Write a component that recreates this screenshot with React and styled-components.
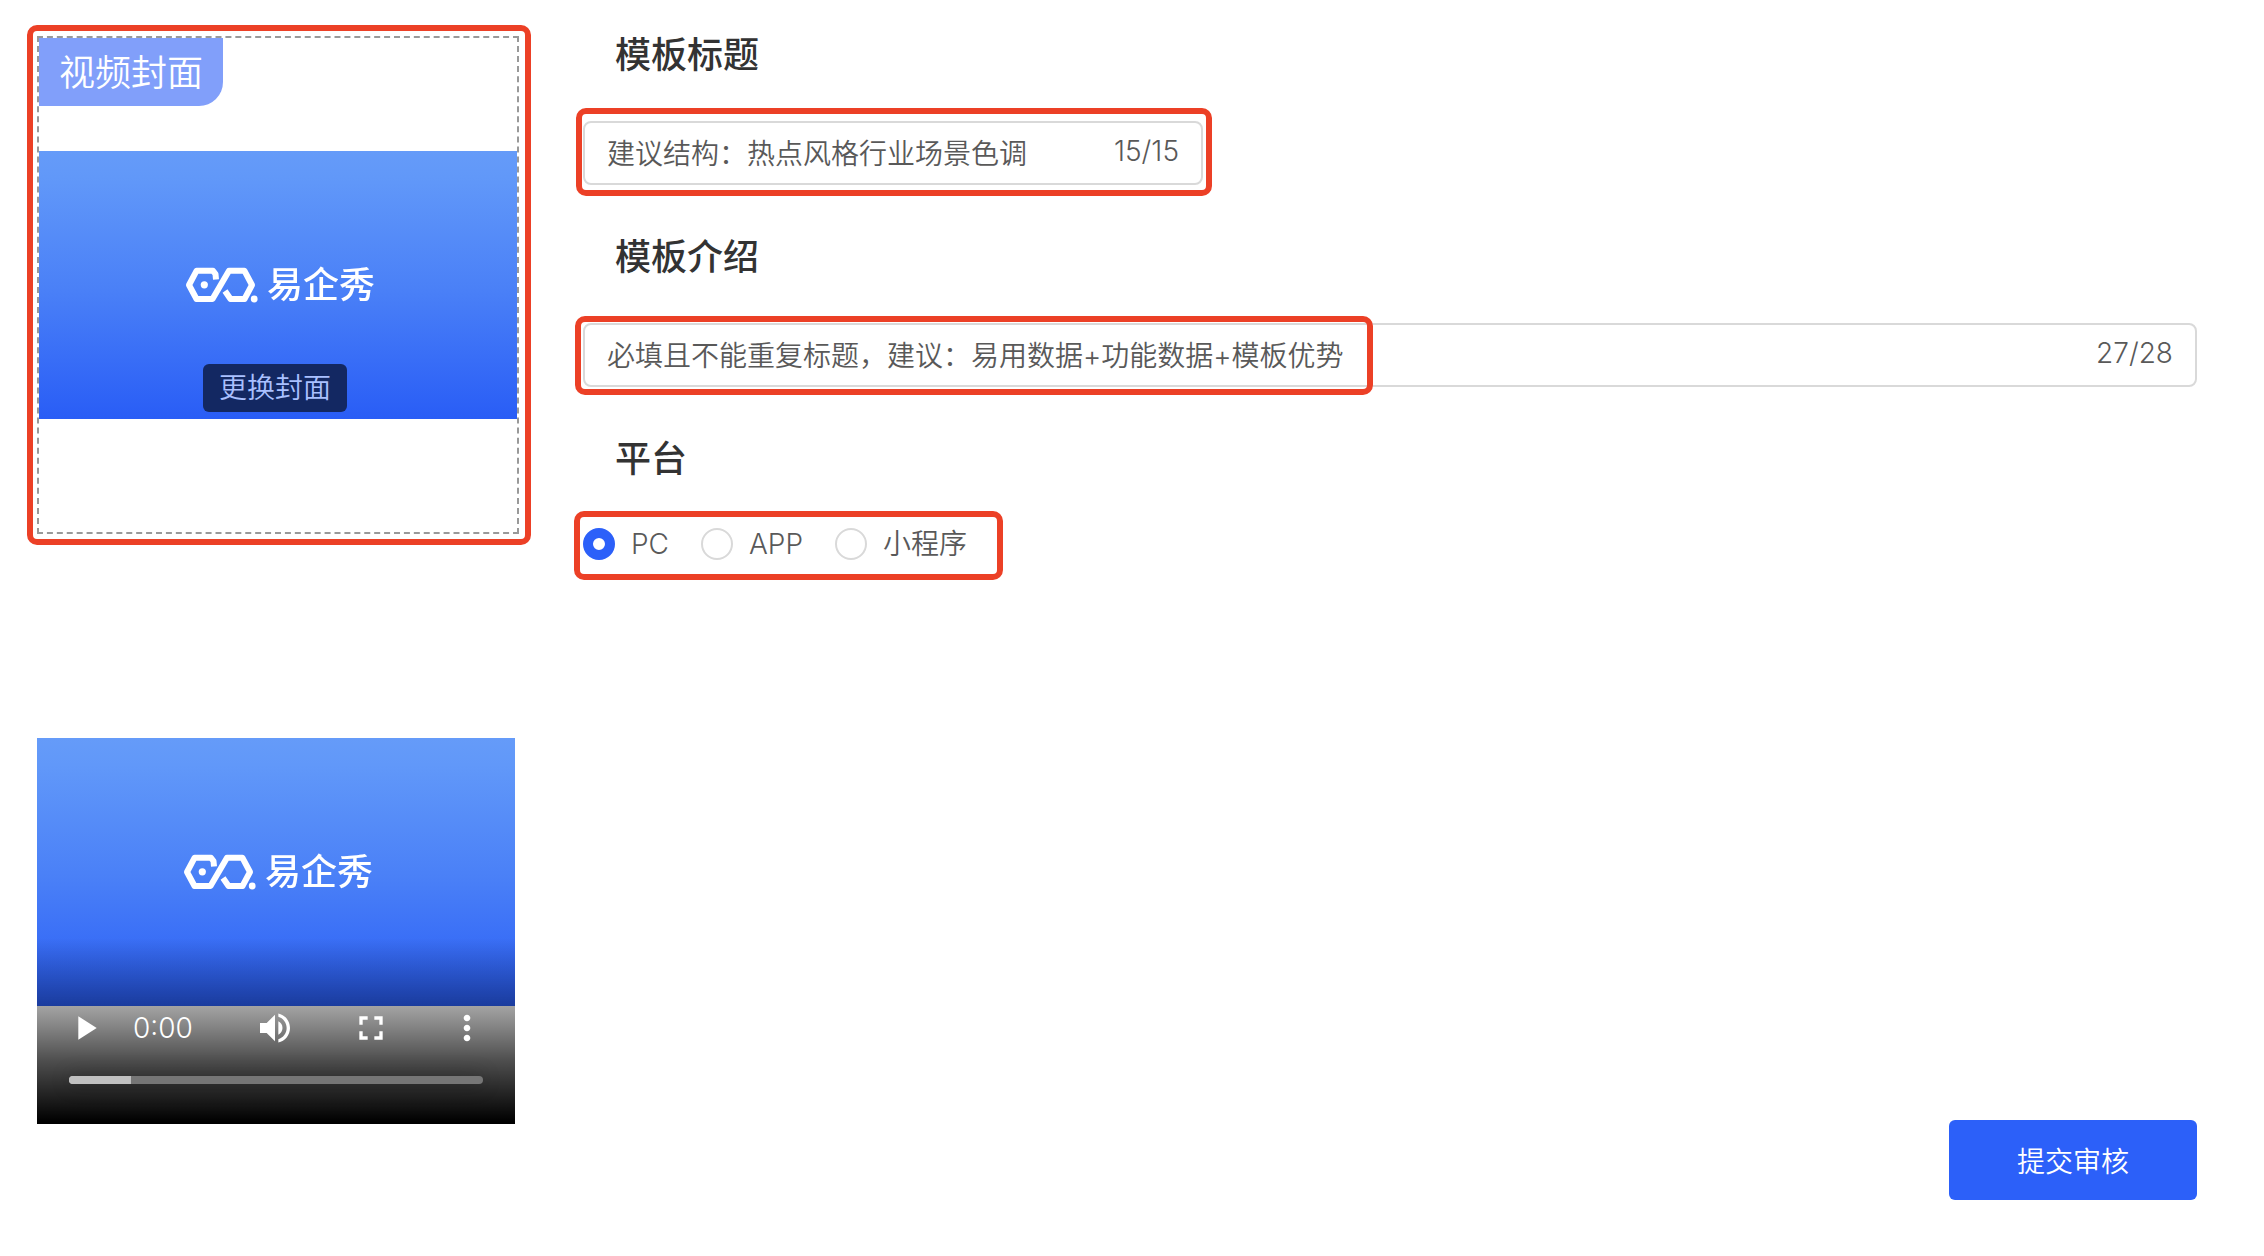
import React, { useState } from 'react';
import styled, { createGlobalStyle } from 'styled-components';
import { MdFullscreen, MdMoreVert, MdPlayArrow, MdVolumeUp } from 'react-icons/md';

const platforms = ['PC', 'APP', '小程序'];

const Logo = () => (
  <LogoSvg viewBox="-2 0 190 38" role="img" aria-label="易企秀">
    <defs>
      <filter id="soft" x="-5%" y="-10%" width="110%" height="120%">
        <feGaussianBlur stdDeviation="0.6" />
      </filter>
    </defs>
    <g filter="url(#soft)">
      <path
        d="M31 13.5 L30.5 8 L28 4.8 H11.5 L4 19 L11.5 33 H27.5 L44 4.8 H59.5 L67 19 L59.5 33 H45.5 L40 25"
        fill="none"
        stroke="#fff"
        strokeWidth="6"
        strokeLinejoin="round"
      />
      <circle cx="19.3" cy="18.8" r="3.6" fill="#fff" />
      <circle cx="69.2" cy="33" r="3.4" fill="#fff" />
      <text x="82" y="32">易企秀</text>
    </g>
  </LogoSvg>
);

const TextField = ({ id, title, value, onChange, max, count, width, children }) => (
  <Section>
    <Title as="label" htmlFor={id}>{title}</Title>
    <Field $width={width}>
      <FieldInput id={id} type="text" value={value} maxLength={max} onChange={(e) => onChange(e.target.value)} />
      <Counter>{count}/{max}</Counter>
      {children}
    </Field>
  </Section>
);

const App = () => {
  const [name, setName] = useState('建议结构：热点风格行业场景色调');
  const [intro, setIntro] = useState('必填且不能重复标题，建议：易用数据+功能数据+模板优势');
  const [platform, setPlatform] = useState('PC');

  return (
    <>
      <GlobalStyle />
      <Page>
        <Media>
          <Cover>
            <CoverTag>视频封面</CoverTag>
            <Poster>
              <Logo />
              <ChangeButton type="button">更换封面</ChangeButton>
            </Poster>
            <Highlight $inset="-13px -14px -13px -12px" />
          </Cover>

          <Video>
            <Poster>
              <Logo />
            </Poster>
            <Controls>
              <ControlRow>
                <IconButton type="button" aria-label="播放"><MdPlayArrow /></IconButton>
                <Time>0:00</Time>
                <IconButton type="button" aria-label="音量"><MdVolumeUp /></IconButton>
                <IconButton type="button" aria-label="全屏"><MdFullscreen /></IconButton>
                <IconButton type="button" aria-label="更多"><MdMoreVert /></IconButton>
              </ControlRow>
              <Timeline type="range" min="0" max="100" defaultValue="0" aria-label="进度" />
            </Controls>
          </Video>
        </Media>

        <Form onSubmit={(e) => e.preventDefault()}>
          <TextField id="name" title="模板标题" value={name} onChange={setName} count={name.length} max={15} width="620px">
            <Highlight $inset="-15px -11px -13px -9px" />
          </TextField>
          <TextField id="intro" title="模板介绍" value={intro} onChange={setIntro} count={intro.length} max={28}>
            <Highlight $inset="-9px auto -10px -10px" $width="798px" />
          </TextField>

          <Section>
            <Title id="platform">平台</Title>
            <RadioGroup role="radiogroup" aria-labelledby="platform">
              {platforms.map((item) => (
                <RadioLabel key={item}>
                  <Radio type="radio" name="platform" checked={platform === item} onChange={() => setPlatform(item)} />
                  {item}
                </RadioLabel>
              ))}
              <Highlight $inset="-14px -36px -17px -9px" />
            </RadioGroup>
          </Section>

          <SubmitButton type="submit">提交审核</SubmitButton>
        </Form>
      </Page>
    </>
  );
};

export default App;

const GlobalStyle = createGlobalStyle`
  * {
    box-sizing: border-box;
  }

  body {
    margin: 0;
    background: #fff;
    color: #595959;
    font-family: Inter, "Noto Sans CJK SC", sans-serif;
    font-size: 28px;
    font-weight: 350;
  }

  button,
  input {
    margin: 0;
    font: inherit;
  }
`;

const Page = styled.main`
  display: grid;
  grid-template-columns: 482px 1fr;
  gap: 64px;
  min-height: 100vh;
  padding: 36px 67px 56px 37px;
`;

const Media = styled.div`
  display: flex;
  flex-direction: column;
  gap: 204px;
`;

/* Red marker drawn around the parts that have to be filled in */
const Highlight = styled.span`
  position: absolute;
  inset: ${({ $inset }) => $inset};
  width: ${({ $width }) => $width || 'auto'};
  border: 6px solid #ec4026;
  border-radius: 10px;
  pointer-events: none;
`;

const Cover = styled.div`
  position: relative;
  height: 498px;
  padding-top: 113px;
  border: 2px dashed #999;
`;

const CoverTag = styled.div`
  position: absolute;
  top: 0;
  left: 0;
  padding: 0 20px;
  border-radius: 0 0 24px 0;
  background: #819ffa;
  color: #fff;
  font-size: 36px;
  line-height: 70px;
  height: 68px;
`;

const Poster = styled.div`
  position: relative;
  display: flex;
  align-items: center;
  justify-content: center;
  height: 268px;
  background: linear-gradient(#659bf9 0%, #6198f9 10%, #4a80f7 52%, #295df6 100%);
`;

const LogoSvg = styled.svg`
  width: 190px;
  height: 38px;
  overflow: visible;

  text {
    fill: #fff;
    font-family: "Noto Sans CJK SC", sans-serif;
    font-size: 36px;
    font-weight: 500;
  }
`;

const ChangeButton = styled.button`
  position: absolute;
  bottom: 7px;
  left: 164px;
  padding: 0 16px;
  border: 0;
  border-radius: 6px;
  background: #132862;
  color: #a9c0ff;
  line-height: 48px;
`;

const Video = styled.div`
  position: relative;
  width: 478px;
  height: 386px;
`;

const Controls = styled.div`
  position: absolute;
  inset: 200px 0 0;
  padding-top: 58px;
  background: linear-gradient(
    transparent 0,
    rgba(0, 0, 0, 0.36) 68px,
    rgba(0, 0, 0, 0.49) 90px,
    rgba(0, 0, 0, 0.69) 122px,
    rgba(0, 0, 0, 0.83) 150px,
    #000 184px
  );
`;

const ControlRow = styled.div`
  display: flex;
  align-items: center;
  gap: 32px;
  padding: 0 16px;
`;

const IconButton = styled.button`
  display: flex;
  align-items: center;
  justify-content: center;
  width: 64px;
  height: 64px;
  padding: 0;
  border: 0;
  background: none;
  color: #fff;
  font-size: 40px;
`;

const Time = styled.span`
  flex: 1;
  margin-left: -16px;
  color: #fff;
`;

const Timeline = styled.input`
  display: block;
  appearance: none;
  width: calc(100% - 64px);
  height: 8px;
  margin: 16px 32px 0;
  border-radius: 4px;
  background: linear-gradient(#c0c0c0, #c0c0c0) 0 0 / 15% 100% no-repeat #767676;
  box-shadow: 0 0 20px rgba(0, 0, 0, 0.3);

  &::-webkit-slider-thumb {
    appearance: none;
    width: 8px;
    height: 8px;
    border-radius: 4px;
    background: #c0c0c0;
  }
`;

const Form = styled.form`
  display: flex;
  flex-direction: column;
  gap: 53px;
`;

const Section = styled.section`
  display: flex;
  flex-direction: column;
  align-items: flex-start;
  gap: 47px;
`;

const Title = styled.h2`
  margin: 0 0 0 32px;
  color: #333;
  font-size: 36px;
  font-weight: 500;
  line-height: 38px;
`;

const Field = styled.div`
  position: relative;
  display: flex;
  align-items: center;
  gap: 16px;
  width: ${({ $width }) => $width || '100%'};
  height: 64px;
  padding: 0 22px;
  border: 2px solid #d9d9d9;
  border-radius: 8px;
`;

const FieldInput = styled.input`
  flex: 1;
  min-width: 0;
  padding: 0 0 2px;
  border: 0;
  outline: 0;
  background: none;
  color: #595959;
`;

const Counter = styled.span`
  padding-bottom: 4px;
`;

const RadioGroup = styled.div`
  position: relative;
  display: flex;
  gap: 32px;
  padding: 3px 0;
`;

const RadioLabel = styled.label`
  display: flex;
  align-items: center;
  gap: 16px;
  line-height: 32px;
`;

const Radio = styled.input`
  appearance: none;
  width: 32px;
  height: 32px;
  border: 2px solid #d9d9d9;
  border-radius: 50%;
  background: #fff;

  &:checked {
    border: 10px solid #2c60f9;
  }
`;

const SubmitButton = styled.button`
  align-self: flex-end;
  width: 248px;
  height: 80px;
  margin-top: auto;
  border: 0;
  border-radius: 6px;
  background: #2c60f9;
  color: #fff;
`;
